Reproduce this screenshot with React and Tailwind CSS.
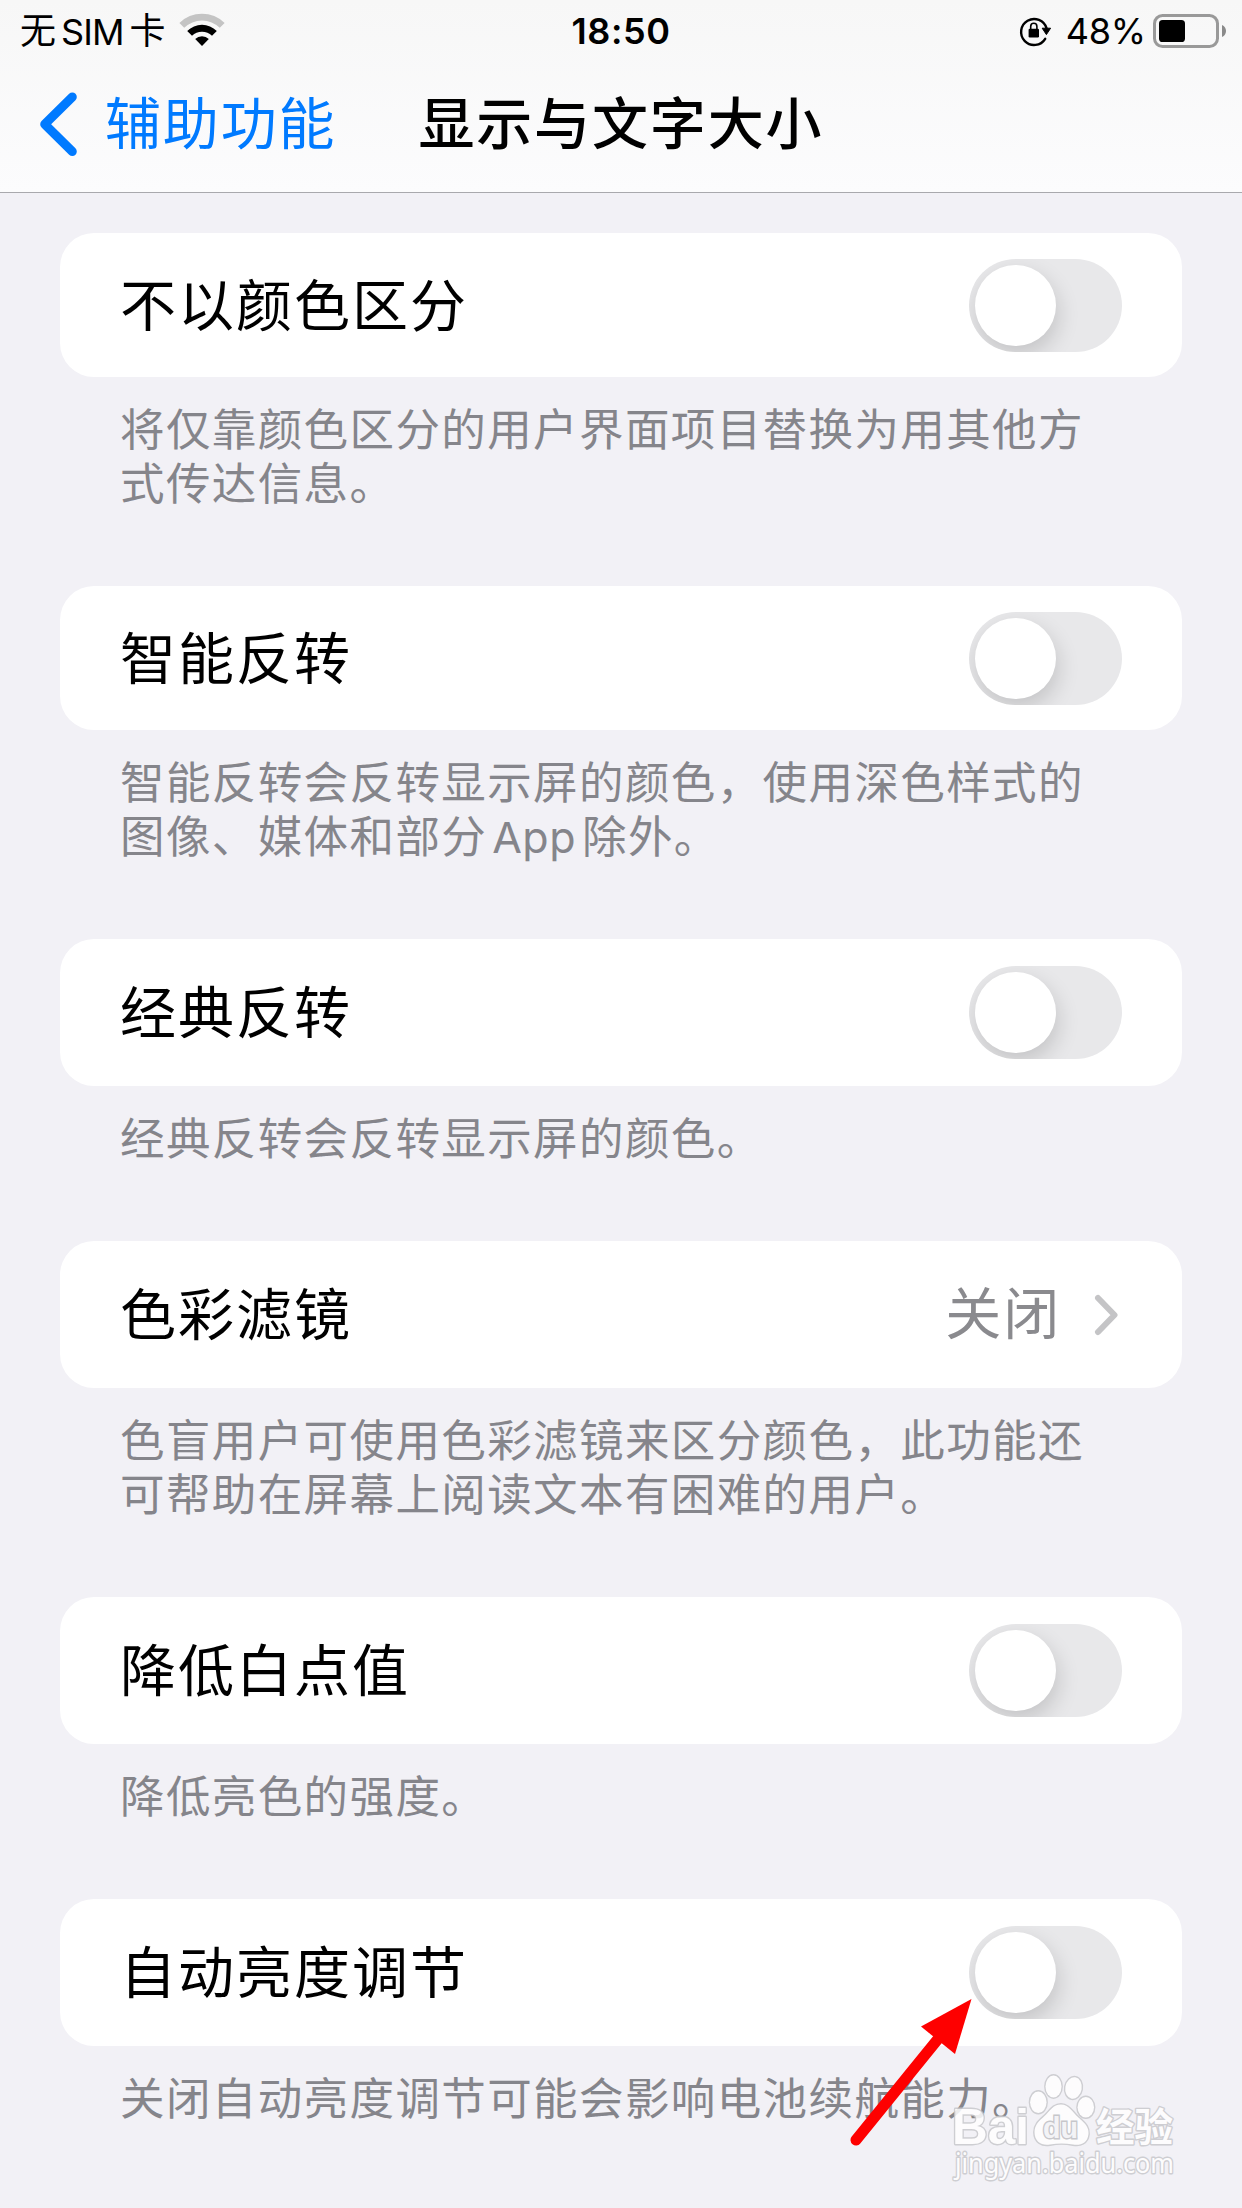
function WifiIcon() {
  return (
    <svg width="46" height="34" viewBox="0 0 46 34" className="-mt-[2px] ml-[13px] shrink-0">
      <path d="M0.4 10 A32 32 0 0 1 45.6 10 L40.8 14.8 A25.4 25.4 0 0 0 5.2 14.8Z" fill="#c4c4c4" />
      <path d="M8.2 17.9 A21 21 0 0 1 37.8 17.9 L33 22.8 A14.2 14.2 0 0 0 13 22.8Z" fill="#000" />
      <path d="M16.2 26 A9.8 9.8 0 0 1 29.8 26 L23 33Z" fill="#000" />
    </svg>
  );
}

function RotationLockIcon() {
  return (
    <svg width="33" height="32" viewBox="0 0 33 32" className="shrink-0">
      <path d="M26.2 23.8 A13 13 0 1 1 27.6 13.4" fill="none" stroke="#000" strokeWidth="2.4" strokeLinecap="round" />
      <path d="M23.2 13.2 H31.6 L27.4 19.6Z" fill="#000" stroke="#000" strokeWidth="1" strokeLinejoin="round" />
      <rect x="9.6" y="13.8" width="10.4" height="8.6" rx="1.2" fill="#000" />
      <path d="M11.7 14.2 V11.4 a3.1 3.1 0 0 1 6.2 0 V14.2" fill="none" stroke="#000" strokeWidth="1.6" />
    </svg>
  );
}

function BatteryIcon() {
  return (
    <svg width="74" height="34" viewBox="0 0 74 34" className="ml-[7px] shrink-0">
      <rect x="1.5" y="1.5" width="63" height="31" rx="8" fill="none" stroke="#999" strokeWidth="3" />
      <rect x="6" y="6" width="26" height="22" rx="3.6" fill="#000" />
      <path d="M69 11 C71.7 12 73 14.5 73 17 C73 19.5 71.7 22 69 23Z" fill="#8a8a8a" />
    </svg>
  );
}

function Toggle() {
  return (
    <div className="h-[93px] w-[153px] overflow-hidden rounded-full bg-[#e8e8ea] p-[6px]">
      <div className="size-[81px] rounded-full bg-white shadow-[2px_9px_22px_rgba(0,0,0,0.16)]" />
    </div>
  );
}

function Section({ title, note, block, row, value }) {
  return (
    <section className={block}>
      <div className={`flex w-full items-start justify-between rounded-[34px] bg-white pr-[60px] pl-[60px] ${row}`}>
        <span className="mt-[1px] text-[56px] leading-[93px] tracking-[2px] text-black">{title}</span>
        {value ? (
          <span className="flex items-center text-[56px] leading-[93px] tracking-[1.85px] text-[#8a8a8e]">
            {value}
            <svg className="mr-[3px] ml-[32px]" width="26" height="42" viewBox="0 0 26 42" fill="none" stroke="#c4c4c6" strokeWidth="6" strokeLinecap="round" strokeLinejoin="round">
              <path d="M5 4 21.5 21 5 38" />
            </svg>
          </span>
        ) : (
          <Toggle />
        )}
      </div>
      <p className="pt-[26px] pl-[60px] text-[44.5px] leading-[54px] tracking-[1.4px] whitespace-pre text-[#85858b]">{note}</p>
    </section>
  );
}

const sections = [
  { title: "不以颜色区分", note: "将仅靠颜色区分的用户界面项目替换为用其他方\n式传达信息。", block: "h-[353px]", row: "h-[144px] pt-[26px]" },
  {
    title: "智能反转",
    note: (
      <>
        {"智能反转会反转显示屏的颜色，使用深色样式的\n图像、媒体和部分"}
        <span className="mr-[6px] ml-[5px] text-[43px] tracking-[0.5px]">App</span>
        除外。
      </>
    ),
    block: "h-[353px]",
    row: "h-[144px] pt-[26px]",
  },
  { title: "经典反转", note: "经典反转会反转显示屏的颜色。", block: "h-[302px]", row: "h-[147px] pt-[27px]" },
  { title: "色彩滤镜", note: "色盲用户可使用色彩滤镜来区分颜色，此功能还\n可帮助在屏幕上阅读文本有困难的用户。", block: "h-[356px]", row: "h-[147px] pt-[27px]", value: "关闭" },
  { title: "降低白点值", note: "降低亮色的强度。", block: "h-[302px]", row: "h-[147px] pt-[27px]" },
  { title: "自动亮度调节", note: "关闭自动亮度调节可能会影响电池续航能力。", block: "h-[300px]", row: "h-[147px] pt-[27px]" },
];

function Pointer() {
  return (
    <svg className="absolute top-[1990px] left-[840px]" width="140" height="164" viewBox="840 1990 140 164">
      <path d="M856 2140 L938 2039" stroke="#fe0000" strokeWidth="11" strokeLinecap="round" />
      <path d="M971.5 1999 L921 2026.5 L955 2054Z" fill="#fe0000" />
    </svg>
  );
}

function Watermark() {
  return (
    <svg className="absolute top-[2066px] left-[944px] overflow-visible opacity-85" width="240" height="130" viewBox="944 2066 240 130">
      <g fill="#fff" stroke="#c8c8cc" strokeWidth="2.8" paintOrder="stroke" strokeLinejoin="round">
        <text x="952" y="2144" fontSize="50" fontWeight="700" fontFamily="Liberation Sans" textLength="77" lengthAdjust="spacingAndGlyphs">Bai</text>
        <text x="1096" y="2141" fontSize="39" fontWeight="700" fontFamily="Noto Sans CJK SC" textLength="77" lengthAdjust="spacingAndGlyphs">经验</text>
        <text x="955" y="2173" fontSize="27" fontFamily="Noto Sans" textLength="219" lengthAdjust="spacingAndGlyphs">jingyan.baidu.com</text>
        <ellipse cx="1038.3" cy="2102.3" rx="8.2" ry="10.8" />
        <ellipse cx="1053.5" cy="2086.5" rx="8" ry="11" />
        <ellipse cx="1073.5" cy="2088" rx="8.2" ry="10.8" transform="rotate(10 1073.5 2088)" />
        <ellipse cx="1085.8" cy="2107.3" rx="8.2" ry="10.3" />
        <path d="M1061 2104.5 C1069 2104.5 1072 2112 1079 2118 C1086 2124 1089 2128 1088.5 2134 C1087.5 2144 1080 2145.5 1073 2144.5 C1065 2143 1058 2143 1050 2144.5 C1042 2146 1034.5 2142 1034.5 2132 C1034.5 2125 1039 2121 1044 2116.5 C1050 2111 1053 2104.5 1061 2104.5Z" />
      </g>
      <text x="1043" y="2138" fontSize="29" fontWeight="700" fontFamily="Liberation Sans" fill="#f4f4f7" stroke="#c0c0c4" strokeWidth="2.8" paintOrder="stroke" textLength="35" lengthAdjust="spacingAndGlyphs">du</text>
    </svg>
  );
}

export default function App() {
  return (
    <div className="relative h-[2208px] w-[1242px] overflow-hidden bg-[#f2f1f6] font-['Inter','Noto_Sans_CJK_SC',sans-serif]">
      <header className="h-[193px] border-b border-[#a9a9ad] bg-linear-to-b from-[#f7f7f7] to-[#fcfcfd]">
        <div className="grid h-[60px] grid-cols-3 items-center pr-[15px] pl-[20px] text-[36px] leading-[60px]">
          <div className="flex items-center whitespace-nowrap">
            <span>无</span>
            <span className="mr-[6px] ml-[5px] pt-[2px] tracking-[-0.9px]">SIM</span>
            <span>卡</span>
            <WifiIcon />
          </div>
          <div className="pr-[5px] text-center font-semibold tracking-[0.6px]">18:50</div>
          <div className="flex items-center justify-end">
            <RotationLockIcon />
            <span className="ml-[14px] tracking-[-0.2px]">48%</span>
            <BatteryIcon />
          </div>
        </div>
        <div className="flex h-[130px] items-start pl-[39px] text-[56px] leading-[128px] tracking-[1.85px]">
          <svg className="mt-[31px] shrink-0" width="40" height="66" viewBox="0 0 40 66" fill="none" stroke="#007aff" strokeWidth="9" strokeLinecap="round" strokeLinejoin="round">
            <path d="M33.3 6 L5.7 33.2 L33.3 60.5" />
          </svg>
          <span className="ml-[26px] text-[#007aff]">辅助功能</span>
          <span className="ml-[82px] font-medium">显示与文字大小</span>
        </div>
      </header>
      <main className="px-[60px] pt-[40px]">
        {sections.map((s) => (
          <Section key={s.title} {...s} />
        ))}
      </main>
      <Watermark />
      <Pointer />
    </div>
  );
}
